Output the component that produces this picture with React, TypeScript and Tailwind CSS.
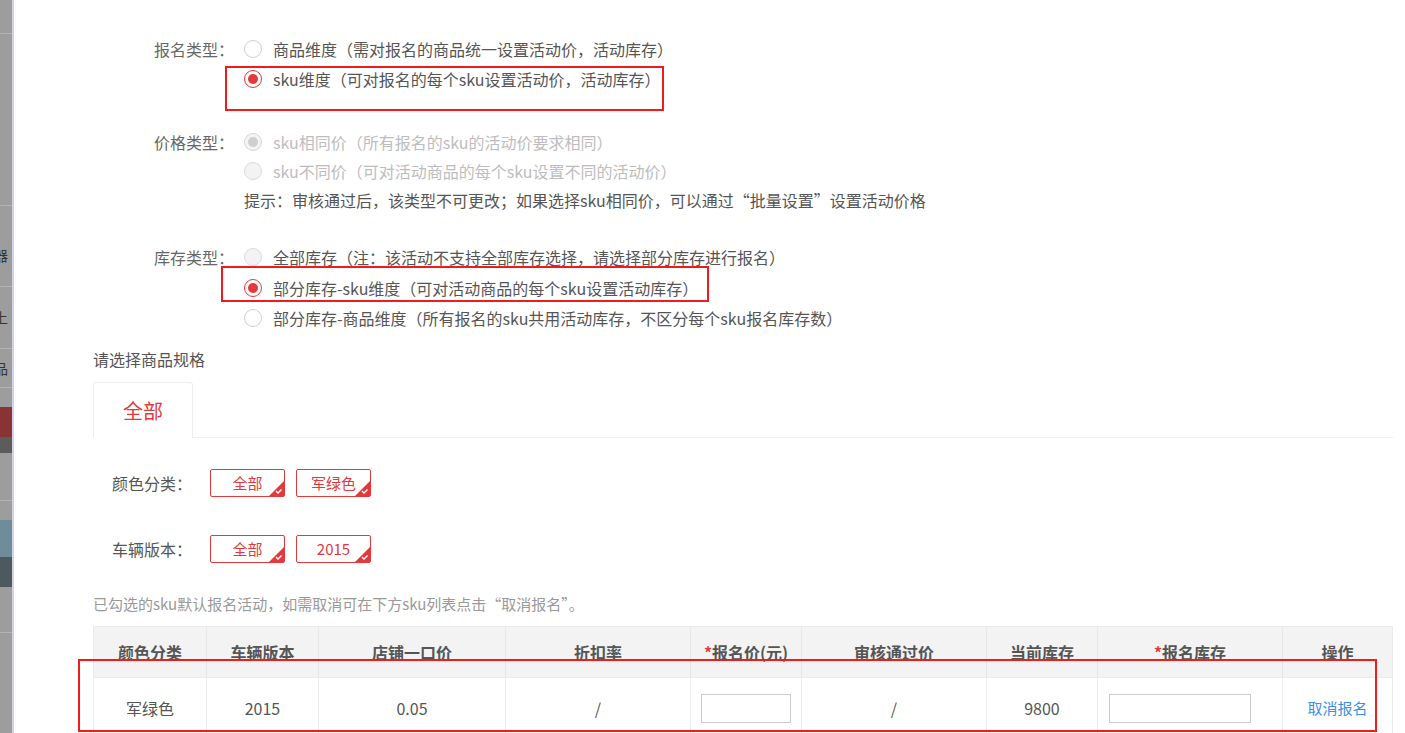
import React from 'react';

const font = "font-['Noto_Sans_CJK_SC','Noto_Sans',sans-serif]";

type RadioState = 'on' | 'off' | 'disabledOn' | 'disabledOff';

function Radio({ state }: { state: RadioState }) {
  if (state === 'on') {
    return (
      <span className="w-[18px] h-[18px] rounded-full border border-[#e4393c] bg-white flex items-center justify-center shrink-0">
        <span className="w-[10px] h-[10px] rounded-full bg-[#e4393c]" />
      </span>
    );
  }
  if (state === 'disabledOn') {
    return (
      <span className="w-[18px] h-[18px] rounded-full border border-[#d6d6d6] bg-[#f4f4f4] flex items-center justify-center shrink-0">
        <span className="w-[10px] h-[10px] rounded-full bg-[#cfcfcf]" />
      </span>
    );
  }
  if (state === 'disabledOff') {
    return <span className="w-[18px] h-[18px] rounded-full border border-[#dcdcdc] bg-[#f3f3f3] shrink-0" />;
  }
  return <span className="w-[18px] h-[18px] rounded-full border border-[#cfcfcf] bg-white shrink-0" />;
}

function Option({ state, text, muted, h }: { state: RadioState; text: string; muted?: boolean; h: string }) {
  return (
    <div className={`flex items-center ${h}`}>
      <Radio state={state} />
      <span className={`ml-[11px] whitespace-nowrap ${muted ? 'text-[#bdbdbd]' : 'text-[#555]'}`}>{text}</span>
    </div>
  );
}

function Tag({ label }: { label: string }) {
  return (
    <div className="relative w-[75px] h-[28px] border border-[#e4393c] rounded-[2px] flex items-center justify-center text-[15px] text-[#e4393c] bg-white">
      {label}
      <svg className="absolute right-0 bottom-0" width="15" height="15" viewBox="0 0 15 15">
        <polygon points="15,0 15,15 0,15" fill="#e4393c" />
        <polyline points="7,10 9,12 12.5,8.5" fill="none" stroke="#fff" strokeWidth="1.4" />
      </svg>
    </div>
  );
}

const cols = [
  { title: '颜色分类', w: 'w-[113px]' },
  { title: '车辆版本', w: 'w-[112px]' },
  { title: '店铺一口价', w: 'w-[187px]' },
  { title: '折扣率', w: 'w-[185px]' },
  { title: '报名价(元)', w: 'w-[111px]', req: true },
  { title: '审核通过价', w: 'w-[185px]' },
  { title: '当前库存', w: 'w-[111px]' },
  { title: '报名库存', w: 'w-[185px]', req: true },
  { title: '操作', w: 'w-[109px]' },
];

function SideStrip() {
  return (
    <div className="w-[12px] h-full bg-[#9d9d9d] flex flex-col overflow-hidden shrink-0 text-[#333] text-[14px] leading-none">
      <div className="h-[14px] text-[#c8c8c8] text-[12px] -ml-[4px]">)</div>
      <div className="h-[19px]" />
      <div className="h-px bg-[#b3b3b3]" />
      <div className="h-[171px]" />
      <div className="h-px bg-[#b3b3b3]" />
      <div className="h-[42px]" />
      <div className="h-[16px] -ml-[6px] whitespace-nowrap">器</div>
      <div className="h-[22px]" />
      <div className="h-px bg-[#b3b3b3]" />
      <div className="h-[23px]" />
      <div className="h-[16px] -ml-[6px] whitespace-nowrap">上</div>
      <div className="h-[22px]" />
      <div className="h-px bg-[#b3b3b3]" />
      <div className="h-[12px]" />
      <div className="h-[16px] -ml-[6px] whitespace-nowrap">品</div>
      <div className="h-[10px]" />
      <div className="h-px bg-[#b3b3b3]" />
      <div className="h-[19px]" />
      <div className="h-[30px] bg-[#8a3334]" />
      <div className="h-[16px] bg-[#5c5c5c]" />
      <div className="h-[47px]" />
      <div className="h-px bg-[#b3b3b3]" />
      <div className="h-[19px]" />
      <div className="h-[37px] bg-[#6e8c99]" />
      <div className="h-[30px] bg-[#4c5a60]" />
      <div className="h-[45px]" />
      <div className="h-px bg-[#b3b3b3]" />
    </div>
  );
}

export default function App() {
  return (
    <div className={`w-[1405px] h-[733px] overflow-hidden bg-white flex ${font}`}>
      <SideStrip />
      <div className="w-[2px] h-full bg-[#d3d3ee] shrink-0" />
      <div className="relative flex-1 h-full overflow-hidden">
        <div className="pl-[79px] pt-[34px] text-[16px]">
          {/* 报名类型 */}
          <div className="flex">
            <div className="w-[151px] h-[30px] flex items-center justify-end pr-[10px] text-[#666]">报名类型：</div>
            <div className="flex flex-col">
              <Option h="h-[30px]" state="off" text="商品维度（需对报名的商品统一设置活动价，活动库存）" />
              <Option h="h-[30px]" state="on" text="sku维度（可对报名的每个sku设置活动价，活动库存）" />
            </div>
          </div>

          {/* 价格类型 */}
          <div className="flex mt-[33px]">
            <div className="w-[151px] h-[29px] flex items-center justify-end pr-[10px] text-[#666]">价格类型：</div>
            <div className="flex flex-col">
              <Option h="h-[29px]" state="disabledOn" muted text="sku相同价（所有报名的sku的活动价要求相同）" />
              <Option h="h-[29px]" state="disabledOff" muted text="sku不同价（可对活动商品的每个sku设置不同的活动价）" />
              <div className="h-[29px] flex items-center text-[#555] whitespace-nowrap">
                提示：审核通过后，该类型不可更改；如果选择sku相同价，可以通过“批量设置”设置活动价格
              </div>
            </div>
          </div>

          {/* 库存类型 */}
          <div className="flex mt-[28px]">
            <div className="w-[151px] h-[30px] flex items-center justify-end pr-[10px] text-[#666]">库存类型：</div>
            <div className="flex flex-col">
              <Option h="h-[30px]" state="disabledOff" text="全部库存（注：该活动不支持全部库存选择，请选择部分库存进行报名）" />
              <Option h="h-[31px]" state="on" text="部分库存-sku维度（可对活动商品的每个sku设置活动库存）" />
              <Option h="h-[30px]" state="off" text="部分库存-商品维度（所有报名的sku共用活动库存，不区分每个sku报名库存数）" />
            </div>
          </div>

          <div className="mt-[16px] h-[20px] flex items-center text-[#555]">请选择商品规格</div>

          {/* tabs */}
          <div className="mt-[13px] w-[1300px] h-[56px] border-b border-[#eeeeee] flex">
            <div className="w-[100px] h-[56px] border border-b-0 border-[#eeeeee] rounded-t-[3px] bg-white flex items-center justify-center text-[20px] text-[#e4393c]">
              全部
            </div>
          </div>

          <div className="pl-[19px] mt-[31px] flex items-center">
            <div className="w-[98px] text-[#555]">颜色分类：</div>
            <div className="flex gap-[11px]">
              <Tag label="全部" />
              <Tag label="军绿色" />
            </div>
          </div>
          <div className="pl-[19px] mt-[38px] flex items-center">
            <div className="w-[98px] text-[#555]">车辆版本：</div>
            <div className="flex gap-[11px]">
              <Tag label="全部" />
              <Tag label="2015" />
            </div>
          </div>

          <div className="mt-[31px] h-[20px] flex items-center text-[15px] text-[#999]">
            已勾选的sku默认报名活动，如需取消可在下方sku列表点击“取消报名”。
          </div>

          {/* table */}
          <div className="mt-[12px] w-[1300px] border-l border-r border-t border-[#ebebeb]">
            <div className="flex h-[51px] bg-[#f3f3f3] border-b border-[#ebebeb]">
              {cols.map((c, i) => (
                <div
                  key={c.title}
                  className={`${c.w} shrink-0 h-full flex items-center justify-center font-bold text-[#555] ${i < cols.length - 1 ? 'border-r border-[#e8e8e8]' : ''}`}
                >
                  {c.req && <span className="text-[#e4393c]">*</span>}
                  {c.title}
                </div>
              ))}
            </div>
            <div className="flex h-[60px] text-[#555]">
              <div className="w-[113px] shrink-0 flex items-center justify-center border-r border-[#ebebeb]">军绿色</div>
              <div className="w-[112px] shrink-0 flex items-center justify-center border-r border-[#ebebeb]">2015</div>
              <div className="w-[187px] shrink-0 flex items-center justify-center border-r border-[#ebebeb]">0.05</div>
              <div className="w-[185px] shrink-0 flex items-center justify-center border-r border-[#ebebeb]">/</div>
              <div className="w-[111px] shrink-0 flex items-center pl-[10px] border-r border-[#ebebeb]">
                <input className="w-[90px] h-[29px] border border-[#cccccc] outline-none" />
              </div>
              <div className="w-[185px] shrink-0 flex items-center justify-center border-r border-[#ebebeb]">/</div>
              <div className="w-[111px] shrink-0 flex items-center justify-center border-r border-[#ebebeb]">9800</div>
              <div className="w-[185px] shrink-0 flex items-center pl-[11px] border-r border-[#ebebeb]">
                <input className="w-[142px] h-[29px] border border-[#cccccc] outline-none" />
              </div>
              <div className="w-[109px] shrink-0 flex items-center justify-center text-[#3b8fe8] text-[15px]">取消报名</div>
            </div>
          </div>
        </div>

        {/* red annotation boxes */}
        <div className="absolute left-[211px] top-[66px] w-[439px] h-[45px] border-2 border-[#f01b1b]" />
        <div className="absolute left-[207px] top-[266px] w-[488px] h-[36px] border-2 border-[#f01b1b]" />
        <div className="absolute left-[64px] top-[659px] w-[1299px] h-[73px] border-2 border-[#f01b1b]" />
      </div>
    </div>
  );
}
